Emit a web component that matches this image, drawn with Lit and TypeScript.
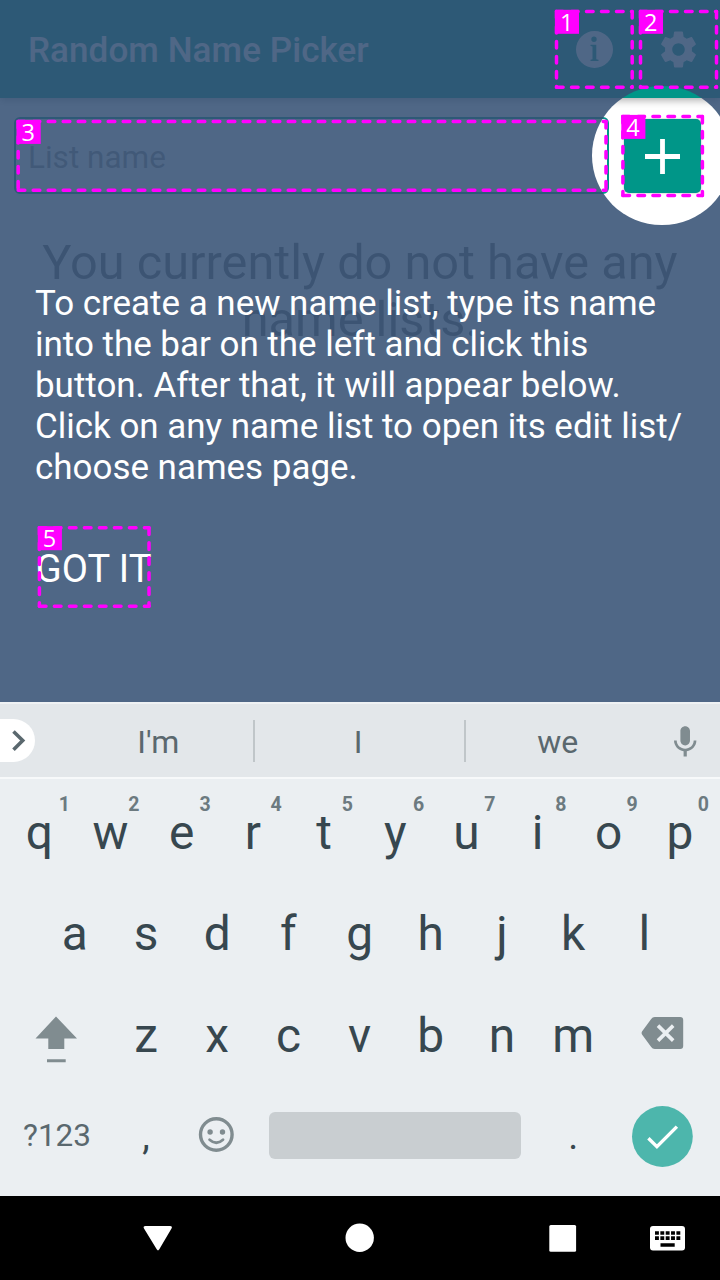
import { LitElement, html, css, svg } from "lit";
import { customElement } from "lit/decorators.js";

type Box = { n: number; x1: number; y1: number; x2: number; y2: number };

const boxes: Box[] = [
  { n: 1, x1: 556.5, y1: 11.4, x2: 632.2, y2: 87.2 },
  { n: 2, x1: 640.5, y1: 11.4, x2: 716.5, y2: 87.2 },
  { n: 3, x1: 18.2, y1: 121.5, x2: 606, y2: 190.3 },
  { n: 4, x1: 622.9, y1: 116.5, x2: 702.4, y2: 195.5 },
  { n: 5, x1: 39.4, y1: 527.8, x2: 149, y2: 606.2 },
];

@customElement("focus-marks")
class FocusMarks extends LitElement {
  static styles = css`
    :host { position: absolute; inset: 0; pointer-events: none; }
    svg { display: block; width: 720px; height: 702px; }
    path { fill: none; stroke: #f0f; stroke-width: 3.5; stroke-linecap: round; stroke-dasharray: 6.6 8.4; }
    rect { fill: #f0f; }
    text { font: 23.5px "Open Sans", "Noto Sans", sans-serif; fill: #fff; text-anchor: middle; }
  `;
  render() {
    return html`<svg viewBox="0 0 720 702">
      ${boxes.map((b) => svg`
        <path d="M${b.x1} ${b.y1}H${b.x2}"/>
        <path d="M${b.x2} ${b.y1}V${b.y2}"/>
        <path d="M${b.x1} ${b.y2}H${b.x2}"/>
        <path d="M${b.x1} ${b.y1}V${b.y2}"/>
        <rect x="${b.x1 - 1.6}" y="${b.y1 - 1.6}" width="24.1" height="24"/>
        <text x="${b.x1 + 10.1}" y="${b.y1 + 19.2}">${b.n}</text>`)}
    </svg>`;
  }
}

@customElement("soft-keyboard")
class SoftKeyboard extends LitElement {
  static styles = css`
    :host { display: flex; flex-direction: column; height: 494px; background: #ebeff2; color: #37474f; }
    .bar { box-sizing: border-box; height: 77px; flex: none; display: grid; grid-template-columns: 64px 188.5px 2px 209px 2px 184.5px 70px; align-items: center; justify-items: center; background: #e3e7ea; border-top: 2px solid #eff2f4; border-bottom: 2px solid #f7f9fa; font-size: 32px; color: #5a686e; }
    .word { padding-top: 2px; }
    .word.mid { padding-right: 2px; }
    .more { justify-self: start; width: 35px; height: 43px; border-radius: 0 22px 22px 0; background: #fff; }
    .more svg { display: block; }
    .sep { width: 2px; height: 42px; background: #c0c6c9; }
    .mic { width: 38.4px; height: 38.4px; margin-top: 4px; margin-left: 1px; }
    .keys { padding: 3px 4.4px 0 3.6px; }
    .row { display: flex; justify-content: center; height: 101.5px; }
    .key { position: relative; width: 71.2px; display: flex; align-items: center; justify-content: center; font-size: 47.8px; line-height: 56px; }
    .wide { width: 106.8px; }
    .num { position: absolute; right: 6.6px; top: 10.5px; font-size: 19.5px; font-weight: 700; line-height: 24px; color: #6c7a80; }
    .num.first { right: 5px; }
    .sym { font-size: 31.5px; color: #5a686e; padding-bottom: 2px; box-sizing: border-box; }
    .dot { font-size: 38px; padding-bottom: 2px; box-sizing: border-box; }
    .lift { padding-bottom: 3px; box-sizing: border-box; }
    .enter { padding-bottom: 1px; box-sizing: border-box; }
    .shift { padding-top: 5px; box-sizing: border-box; }
    .space { width: 284.8px; display: flex; align-items: center; justify-content: center; }
    .space div { width: 252px; height: 46.5px; margin: 0 1px 4px 0; border-radius: 6px; background: #c9ced1; }
    .icon { fill: #808c90; }
  `;
  key(c: string, n = "") {
    return html`<div class="key">${c}${n ? html`<span class="num ${n === "1" ? "first" : ""}">${n}</span>` : ""}</div>`;
  }
  render() {
    return html`
      <div class="bar">
        <div class="more"><svg width="35" height="43" viewBox="0 0 35 43"><path d="M13.5 12.5L22.7 21.5L13.5 30.7" fill="none" stroke="#5a686e" stroke-width="3.6"/></svg></div>
        <div class="word">I'm</div><div class="sep"></div><div class="word mid">I</div><div class="sep"></div><div class="word">we</div>
        <svg class="icon mic" viewBox="0 0 24 24"><path d="M12 14c1.66 0 2.99-1.34 2.99-3L15 5c0-1.66-1.34-3-3-3S9 3.34 9 5v6c0 1.66 1.34 3 3 3zm5.3-3c0 3-2.54 5.1-5.3 5.1S6.7 14 6.7 11H5c0 3.41 2.72 6.23 6 6.72V21h2v-3.28c3.28-.48 6-3.3 6-6.72h-1.7z"/></svg>
      </div>
      <div class="keys">
        <div class="row">${[..."qwertyuiop"].map((c, i) => this.key(c, String((i + 1) % 10)))}</div>
        <div class="row">${[..."asdfghjkl"].map((c) => this.key(c))}</div>
        <div class="row">
          <div class="key wide shift"><svg class="icon" width="44" height="50" viewBox="0 0 44 50"><path d="M21 3.500L42 25.500H29.300V36H13.300V25.500H.5zM12 46.300H30.700V49.300H12z"/></svg></div>
          ${[..."zxcvbnm"].map((c) => this.key(c))}
          <div class="key wide lift"><svg class="icon" width="44" height="34" viewBox="0 0 44 34"><path d="M14.700 0H40.200Q43.200 0 43.200 3V29Q43.200 32 40.200 32H14.700Q12.500 32 11.200 30L2 17.500Q1 16 2 14.500L11.200 2Q12.500 0 14.700 0z"/><path d="M18 8.600L33.200 23.600M33.200 8.600L18 23.600" stroke="#ebeff2" stroke-width="3.600"/></svg></div>
        </div>
        <div class="row">
          <div class="key wide sym">?123</div>
          <div class="key dot">,</div>
          <div class="key lift"><svg width="38" height="38" viewBox="0 0 38 38"><g fill="none" stroke="#808c90" stroke-width="3.400"><circle cx="18.300" cy="17.500" r="15.800"/><path d="M11.600 22.800Q18.300 28.800 25 22.800" stroke-width="2.800" stroke-linecap="round"/></g><circle class="icon" cx="12.100" cy="15" r="2.700"/><circle class="icon" cx="24.500" cy="15" r="2.700"/></svg></div>
          <div class="space"><div></div></div>
          <div class="key dot">.</div>
          <div class="key wide enter"><svg width="62" height="61" viewBox="0 0 62 61"><circle cx="31.400" cy="30.500" r="30.400" fill="#4db6ac"/><path d="M17.400 32.300L25.900 40.600L45.900 20.600" fill="none" stroke="#fff" stroke-width="3.400"/></svg></div>
        </div>
      </div>`;
  }
}

@customElement("app-root")
class AppRoot extends LitElement {
  static styles = css`
    :host { display: flex; flex-direction: column; width: 720px; height: 1280px; overflow: hidden; font-family: Roboto, sans-serif; }
    .stage { position: relative; height: 702px; flex: none; overflow: hidden; background: #fff; }
    header { position: relative; box-sizing: border-box; height: 98px; padding: 3px 20px 0 28px; display: flex; align-items: center; background: #009688; color: #fff; box-shadow: 0 2px 8px rgba(0,0,0,.35); }
    h1 { margin: 0; flex: 1; padding-top: 1px; font-size: 35px; font-weight: 500; line-height: 42px; letter-spacing: .08px; }
    .info { margin-right: 44.500px; margin-top: -2px; }
    .gear { margin-top: -3px; }
    .entry { display: flex; gap: 15px; align-items: center; padding: 19px 19px 0 14px; }
    .field { box-sizing: border-box; flex: 1; height: 77px; border: 2px solid #009688; border-radius: 6px; padding-left: 12px; font-size: 31.5px; line-height: 77px; color: #999; }
    .add { width: 77px; height: 74px; border-radius: 5px; background: #009688; display: grid; place-items: center; box-shadow: 0 0 2px rgba(0,0,0,.35); }
    .empty { margin: 40px 0 0; text-align: center; font-size: 48.7px; line-height: 57.4px; color: #757575; }
    .spot { position: absolute; left: 592px; top: 86px; width: 139.6px; height: 139.4px; border-radius: 50%; box-shadow: 0 0 0 1000px rgba(52,80,115,.867); }
    .tour { position: absolute; inset: 283px 0 0 35px; color: #fff; font-size: 34.95px; line-height: 41px; white-space: nowrap; }
    .got { margin-top: 59px; padding-left: .8px; font-size: 38.1px; line-height: 44px; }
    nav { flex: 1; background: #000; display: flex; align-items: center; }
    nav svg { display: block; }
  `;
  render() {
    return html`
      <div class="stage">
        <header>
          <h1>Random Name Picker</h1>
          <svg class="info" width="37" height="37" viewBox="0 0 37 37"><path fill="#fff" fill-rule="evenodd" d="M18.500 0A18.500 18.500 0 1 1 18.500 37A18.500 18.500 0 1 1 18.500 0zM18 5.500A2.700 2.700 0 1 0 18 10.900A2.700 2.700 0 1 0 18 5.500zM14.500 13.800V15L16.500 15.500V28.200L14.500 28.700V29.900H22.500V28.700L20.300 28.200V13.800z"/></svg>
          <svg class="gear" width="43" height="43" viewBox="0 0 24 24"><path fill="#fff" d="M19.430 12.980c.04-.32.07-.64.07-.98s-.03-.66-.07-.98l2.110-1.650c.19-.15.24-.42.12-.64l-2-3.460c-.12-.22-.39-.3-.61-.22l-2.490 1c-.52-.4-1.080-.73-1.690-.98l-.38-2.650C14.460 2.180 14.250 2 14 2h-4c-.25 0-.46.18-.49.42l-.38 2.650c-.61.25-1.170.59-1.690.98l-2.490-1c-.23-.09-.49 0-.61.22l-2 3.460c-.13.22-.07.49.12.64l2.110 1.650c-.04.32-.07.65-.07.98s.03.66.07.98l-2.110 1.650c-.19.15-.24.42-.12.64l2 3.460c.12.22.39.3.61.22l2.490-1c.52.4 1.080.73 1.690.98l.38 2.650c.03.24.24.42.49.42h4c.25 0 .46-.18.49-.42l.38-2.650c.61-.25 1.170-.59 1.690-.98l2.490 1c.23.09.49 0 .61-.22l2-3.460c.12-.22.07-.49-.12-.64l-2.110-1.650zM12 15.500c-1.930 0-3.500-1.570-3.500-3.500s1.570-3.500 3.500-3.500 3.500 1.570 3.500 3.500-1.570 3.500-3.500 3.500z"/></svg>
        </header>
        <div class="entry">
          <div class="field">List name</div>
          <div class="add"><svg width="35" height="36" viewBox="0 0 35 36"><path d="M0 18.500H35M17.500 1V36" stroke="#fff" stroke-width="4.800"/></svg></div>
        </div>
        <p class="empty">You currently do not have any<br>name lists.</p>
        <div class="spot"></div>
        <div class="tour">
          <div>To create a new name list, type its name<br>into the bar on the left and click this<br>button. After that, it will appear below.<br>Click on any name list to open its edit list/<br>choose names page.</div>
          <div class="got">GOT IT</div>
        </div>
        <focus-marks></focus-marks>
      </div>
      <soft-keyboard></soft-keyboard>
      <nav>
        <svg width="720" height="84" viewBox="0 0 720 84" fill="#fff">
          <path d="M145.500 30H170Q172.800 30 171.500 32.500L159.300 53.300Q158 55.500 156.700 53.300L144 32.500Q142.700 30 145.500 30z"/>
          <circle cx="359.700" cy="41.700" r="14.200"/>
          <rect x="549.300" y="29" width="26.800" height="26.800" rx="1.500"/>
          <path fill-rule="evenodd" d="M653 30H682Q685 30 685 33V51.500Q685 54.500 682 54.500H653Q650 54.500 650 51.500V33Q650 30 653 30zM660.500 47.300V50.700H674.700V47.300z"/>
          <path d="M655 37H680.500M655 42.200H680.500" stroke="#000" stroke-width="3.700" stroke-dasharray="3.900 1.450"/>
        </svg>
      </nav>`;
  }
}
